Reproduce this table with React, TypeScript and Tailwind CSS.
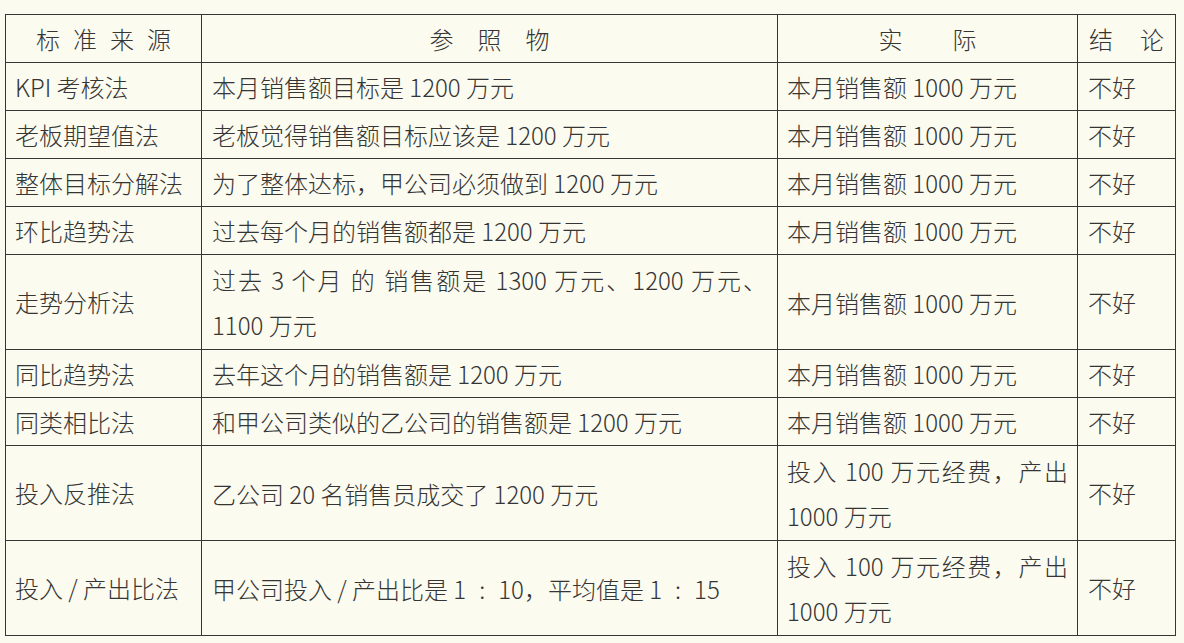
import React from "react";

const rows = [
  { name: "KPI 考核法", ref: ["本月销售额目标是 1200 万元"], actual: ["本月销售额 1000 万元"], h: "h-[48px]" },
  { name: "老板期望值法", ref: ["老板觉得销售额目标应该是 1200 万元"], actual: ["本月销售额 1000 万元"], h: "h-[48px]" },
  { name: "整体目标分解法", ref: ["为了整体达标，甲公司必须做到 1200 万元"], actual: ["本月销售额 1000 万元"], h: "h-[48px]" },
  { name: "环比趋势法", ref: ["过去每个月的销售额都是 1200 万元"], actual: ["本月销售额 1000 万元"], h: "h-[48px]" },
  { name: "走势分析法", ref: ["过去 3 个月 的 销售额是 1300 万元、1200 万元、", "1100 万元"], actual: ["本月销售额 1000 万元"], h: "h-[95px]" },
  { name: "同比趋势法", ref: ["去年这个月的销售额是 1200 万元"], actual: ["本月销售额 1000 万元"], h: "h-[48px]" },
  { name: "同类相比法", ref: ["和甲公司类似的乙公司的销售额是 1200 万元"], actual: ["本月销售额 1000 万元"], h: "h-[48px]" },
  { name: "投入反推法", ref: ["乙公司 20 名销售员成交了 1200 万元"], actual: ["投入 100 万元经费，产出", "1000 万元"], h: "h-[95px]" },
  { name: "投入 / 产出比法", ref: [], actual: ["投入 100 万元经费，产出", "1000 万元"], h: "h-[95px]" },
];

const Lines = ({ lines }: { lines: string[] }) => (
  <div className="leading-[45px]">
    {lines.map((l, i) => (
      <div
        key={i}
        className={
          lines.length > 1 && i === 0 ? "whitespace-pre text-justify [text-align-last:justify]" : "whitespace-pre"
        }
      >
        {l}
      </div>
    ))}
  </div>
);

const Ratio = () => (
  <div className="whitespace-pre leading-[45px]">
    甲公司投入 / 产出比是 1<span className="mx-[13px]">:</span>10，平均值是 1<span className="mx-[13px]">:</span>15
  </div>
);

export default function App() {
  const cell = "border-[1.5px] border-[#363636] align-middle px-[9px] py-0";
  return (
    <div
      className="w-[1184px] h-[643px] bg-[#fcfbef] pt-[14px] pl-[5px] text-[#353535] text-[24px] font-light"
      style={{ fontFamily: '"Noto Sans CJK SC", "Noto Sans", sans-serif' }}
    >
      <table className="table-fixed border-collapse w-[1170px]">
        <colgroup>
          <col className="w-[196px]" />
          <col className="w-[576px]" />
          <col className="w-[300px]" />
          <col className="w-[98px]" />
        </colgroup>
        <thead>
          <tr className="h-[48px]">
            <th className={`${cell} font-light`}>
              <div className="flex justify-center gap-[13px]">
                <span>标</span><span>准</span><span>来</span><span>源</span>
              </div>
            </th>
            <th className={`${cell} font-light`}>
              <div className="flex justify-center gap-[24px]">
                <span>参</span><span>照</span><span>物</span>
              </div>
            </th>
            <th className={`${cell} font-light`}>
              <div className="flex justify-center gap-[50px]">
                <span>实</span><span>际</span>
              </div>
            </th>
            <th className={`${cell} font-light`}>
              <div className="flex justify-between px-[2px]">
                <span>结</span><span>论</span>
              </div>
            </th>
          </tr>
        </thead>
        <tbody>
          {rows.map((r, i) => (
            <tr key={i} className={r.h}>
              <td className={cell}>
                <div className="whitespace-pre">{r.name}</div>
              </td>
              <td className={`${cell} px-[10px]`}>
                {r.ref.length ? <Lines lines={r.ref} /> : <Ratio />}
              </td>
              <td className={cell}>
                <Lines lines={r.actual} />
              </td>
              <td className={`${cell} px-[10px]`}>不好</td>
            </tr>
          ))}
        </tbody>
      </table>
    </div>
  );
}
